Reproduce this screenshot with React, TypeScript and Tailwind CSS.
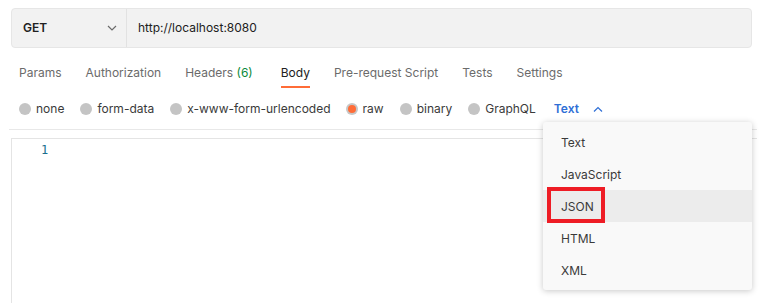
import React from 'react';

const tabs = ['Params', 'Authorization', 'Headers', 'Body', 'Pre-request Script', 'Tests', 'Settings'];
const bodyTypes = ['none', 'form-data', 'x-www-form-urlencoded', 'raw', 'binary', 'GraphQL'];
const langs = ['Text', 'JavaScript', 'JSON', 'HTML', 'XML'];

const Chevron = ({ up = false, className = '' }: { up?: boolean; className?: string }) => (
  <svg width="10" height="6" viewBox="0 0 10 6" className={className} fill="none" stroke="currentColor" strokeWidth="1.2">
    {up ? <path d="M1 5.5 L5 1.5 L9 5.5" /> : <path d="M1 1 L5 5 L9 1" />}
  </svg>
);

export default function App() {
  return (
    <div className="relative w-[764px] h-[303px] overflow-hidden bg-white font-['Inter','Noto_Sans',sans-serif] text-[12px]">
      {/* request bar */}
      <div className="mt-[8px] ml-[11px] mr-[12px] h-[40px] flex rounded-[4px] border border-[#e6e6e6] bg-[#f2f2f2]">
        <div className="w-[115px] flex items-center justify-between pl-[11px] pr-[9px] border-r border-[#e2e2e2]">
          <span className="font-semibold text-[#212121]">GET</span>
          <Chevron className="text-[#6b6b6b]" />
        </div>
        <div className="flex items-center pl-[11px] text-[#212121]">http://localhost:8080</div>
      </div>

      {/* tabs */}
      <div className="flex pl-[19px] mt-[16px] h-[24px] gap-[24px]">
        {tabs.map((t) => (
          <div key={t} className={`relative flex items-start ${t === 'Headers' ? 'mr-[4px]' : ''}`}>
            <span className={t === 'Body' ? 'text-[#212121]' : 'text-[#6b6b6b]'}>
              {t}
              {t === 'Headers' && <span className="text-[#0b8a3c]"> (6)</span>}
            </span>
            {t === 'Body' && <div className="absolute left-0 right-0 bottom-0 h-[2px] bg-[#ff6c37]" />}
          </div>
        ))}
      </div>

      {/* body type radios */}
      <div className="flex items-center pl-[19px] mt-[11px] h-[20px]">
        {bodyTypes.map((b) => (
          <div key={b} className={`flex items-center gap-[5px] ${b === 'x-www-form-urlencoded' ? 'mr-[15px]' : 'mr-[16px]'}`}>
            {b === 'raw' ? (
              <span className="w-[12px] h-[12px] rounded-full bg-[#c7c7c7] flex items-center justify-center">
                <span className="w-[8px] h-[8px] rounded-full bg-[#ff6c37]" />
              </span>
            ) : (
              <span className="w-[12px] h-[12px] rounded-full bg-[#c4c4c4]" />
            )}
            <span className="text-[#3a3a3a]">{b}</span>
          </div>
        ))}
        <div className="flex items-center gap-[14px] ml-[2px]">
          <span className="font-semibold text-[#2f6fd6]">Text</span>
          <Chevron up className="text-[#2f6fd6]" />
        </div>
      </div>

      {/* divider */}
      <div className="mt-[10px] ml-[9px] mr-[7px] h-px bg-[#e8e8e8]" />

      {/* editor */}
      <div className="mt-[8px] ml-[11px] mr-[7px] h-[170px] border-t border-l border-[#e4e4e4]">
        <div className="pl-[29px] pt-[2px] font-['DejaVu_Sans_Mono',monospace] text-[12px] text-[#1a6e8e]">1</div>
      </div>

      {/* language dropdown */}
      <div className="absolute left-[543px] top-[122px] w-[209px] h-[168px] rounded-[3px] bg-[#f9f9f9] shadow-[0_1px_6px_rgba(0,0,0,0.22)] pt-[4px]">
        {langs.map((l) => (
          <div key={l} className={`relative h-[32px] flex items-center pl-[18px] pt-[2px] text-[#3a3a3a] ${l === 'JSON' ? 'bg-[#ececec]' : ''}`}>
            {l}
            {l === 'JSON' && (
              <div className="absolute left-[4px] top-[-3px] w-[58px] h-[36px] border-[4px] border-[#ee1c25]" />
            )}
          </div>
        ))}
      </div>
    </div>
  );
}
